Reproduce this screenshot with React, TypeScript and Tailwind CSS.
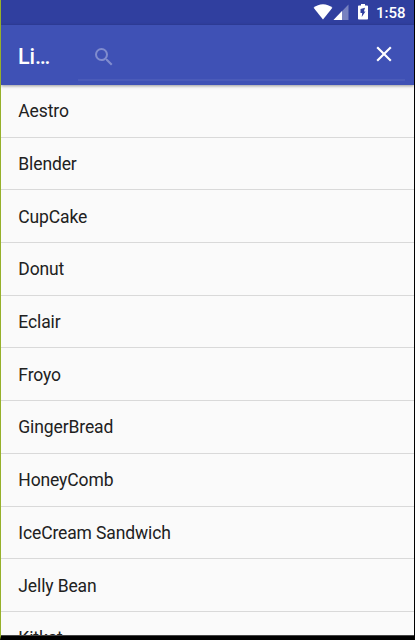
const versions = [
  "Aestro",
  "Blender",
  "CupCake",
  "Donut",
  "Eclair",
  "Froyo",
  "GingerBread",
  "HoneyComb",
  "IceCream Sandwich",
  "Jelly Bean",
  "Kitkat",
];

function StatusBar() {
  return (
    <div className="flex h-[25px] shrink-0 items-start justify-end bg-[#303f9f] pr-[9px] text-white">
      <svg className="mt-1 h-4 w-5" viewBox="0 0 20 16" fill="currentColor">
        <path d="M10 15.6 0.6 3.7C3.3 1.4 6.5 0.2 10 0.2s6.7 1.2 9.4 3.5z" />
      </svg>
      <svg className="mt-1 h-4 w-4" viewBox="0 0 16 16" fill="currentColor">
        <path d="M0.5 16 15.5 0.5V16z" fillOpacity="0.35" />
        <path d="M0.5 16 9 7v9z" />
      </svg>
      <svg className="mt-1 ml-2 h-4 w-3" viewBox="0 0 12 16" fill="currentColor">
        <path
          fillRule="evenodd"
          d="M4 0h4v1.5h2.2c.5 0 .8.3.8.8v12.4c0 .5-.3.8-.8.8H1.8c-.5 0-.8-.3-.8-.8V2.3c0-.5.3-.8.8-.8H4zM8 3.8 3.5 5v4h1.7L4.7 13 8.5 7.5H6.9z"
        />
      </svg>
      <span className="ml-[7px] w-[29px] text-right text-[15px] leading-[26px] font-medium">1:58</span>
    </div>
  );
}

function Toolbar() {
  return (
    <header className="relative z-10 flex h-[60px] shrink-0 bg-[#3f51b5] text-white shadow-[0_1px_3px_rgba(0,0,0,0.4)]">
      <h1 className="w-[77px] pl-[17px] text-[21.5px] leading-[63px] font-medium">Li…</h1>
      <div className="mr-[9px] mb-1 flex flex-1 items-center justify-between border-b-2 border-[#4a5bb9] pt-[5px] pr-2 pl-[14px]">
        <svg className="mt-1 h-6 w-6 text-[#808cce]" viewBox="0 0 24 24" fill="currentColor">
          <path d="M15.5 14h-.79l-.28-.27A6.471 6.471 0 0 0 16 9.5 6.5 6.5 0 1 0 9.5 16c1.61 0 3.09-.59 4.23-1.57l.27.28v.79l5 4.99L20.49 19l-4.99-5zm-6 0C7.01 14 5 11.99 5 9.5S7.01 5 9.5 5 14 7.01 14 9.5 11.99 14 9.5 14z" />
        </svg>
        <button aria-label="Clear search" className="-mt-px">
          <svg className="h-[26px] w-[26px]" viewBox="0 0 24 24" fill="currentColor">
            <path d="M19 6.41 17.59 5 12 10.59 6.41 5 5 6.41 10.59 12 5 17.59 6.41 19 12 13.41 17.59 19 19 17.59 13.41 12z" />
          </svg>
        </button>
      </div>
    </header>
  );
}

export default function App() {
  return (
    <div className="flex h-[640px] w-[415px] flex-col overflow-hidden border-r border-b-4 border-l border-r-black border-b-black border-l-[#96b02a] bg-[#fafafa] font-['Roboto',sans-serif]">
      <StatusBar />
      <Toolbar />
      <ul className="min-h-0 flex-1 overflow-hidden border-b border-[#444]">
        {versions.map((name) => (
          <li
            key={name}
            className="flex h-[52.7px] items-center border-b border-[#d9d9d9] pt-[1.2px] pl-[17.3px] text-[17.5px] tracking-[-0.12px] text-[#212121]"
          >
            {name}
          </li>
        ))}
      </ul>
    </div>
  );
}
